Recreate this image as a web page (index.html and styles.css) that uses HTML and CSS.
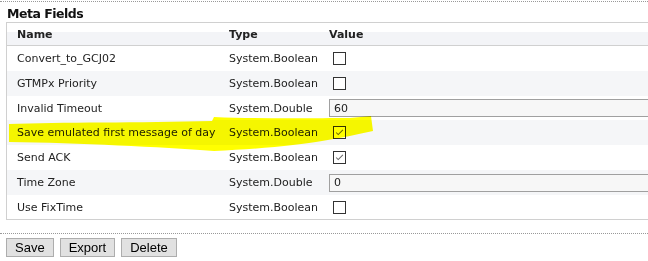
FILE: index.html
```html
<!DOCTYPE html>
<html lang="en">
<head>
  <meta charset="UTF-8">
  <title>Meta Fields</title>
  <link rel="stylesheet" href="styles.css">
</head>
<body>
  <div class="page">
    <h3 class="title">Meta Fields</h3>

    <div class="grid-box">
      <div class="row head">
        <div class="cell name">Name</div>
        <div class="cell type">Type</div>
        <div class="cell value">Value</div>
      </div>
      <div class="row">
        <div class="cell name">Convert_to_GCJ02</div>
        <div class="cell type">System.Boolean</div>
        <div class="cell value"><span class="check"></span></div>
      </div>
      <div class="row alt">
        <div class="cell name">GTMPx Priority</div>
        <div class="cell type">System.Boolean</div>
        <div class="cell value"><span class="check"></span></div>
      </div>
      <div class="row short">
        <div class="cell name">Invalid Timeout</div>
        <div class="cell type">System.Double</div>
        <div class="cell value"><input type="text" class="field" value="60"></div>
      </div>
      <div class="row alt">
        <div class="cell name">Save emulated first message of day</div>
        <div class="cell type">System.Boolean</div>
        <div class="cell value">
          <span class="check"><svg viewBox="0 0 13 13"><path d="M2.5 6.5 L5 9 L10.5 3.5"/></svg></span>
        </div>
      </div>
      <div class="row">
        <div class="cell name">Send ACK</div>
        <div class="cell type">System.Boolean</div>
        <div class="cell value">
          <span class="check"><svg viewBox="0 0 13 13"><path d="M2.5 6.5 L5 9 L10.5 3.5"/></svg></span>
        </div>
      </div>
      <div class="row alt">
        <div class="cell name">Time Zone</div>
        <div class="cell type">System.Double</div>
        <div class="cell value"><input type="text" class="field" value="0"></div>
      </div>
      <div class="row short">
        <div class="cell name">Use FixTime</div>
        <div class="cell type">System.Boolean</div>
        <div class="cell value"><span class="check"></span></div>
      </div>
    </div>

    <div class="controls">
      <button>Save</button>
      <button>Export</button>
      <button>Delete</button>
    </div>

    <!-- highlighter mark drawn over the row -->
    <svg class="marker" width="648" height="261" viewBox="0 0 648 261">
      <path d="M9 124 C 60 122, 140 123, 212 121 L 214 117 C 260 119, 320 118, 350 118 L 371 116 L 373 131 C 355 135, 340 138, 322 141 C 300 145, 260 149, 214 151 C 160 147, 80 143, 9 142 Z"/>
    </svg>
  </div>
</body>
</html>
```

FILE: styles.css
```css
body {
  margin: 0;
  font-family: "DejaVu Sans", Verdana, sans-serif;
  font-size: 11px;
  color: #222;
  background: #fff;
  overflow: hidden;
}

.page {
  position: relative;
  width: 648px;
  height: 261px;
  overflow: hidden;
  border-top: 1px dotted #999;
  margin-top: 1px;
}

.title {
  margin: 0;
  padding: 4px 0 0 7px;
  height: 16px;
  font-size: 12.5px;
  letter-spacing: -0.5px;
  font-weight: bold;
  color: #111;
}

.grid-box {
  margin-left: 6px;
  width: 700px;
  border: 1px solid #d0d0d0;
}

.row {
  display: flex;
  align-items: center;
  height: 25px;
}

.row.short {
  height: 24px;
}

.row.alt {
  background: #f5f6f8;
}

.row.head {
  height: 22px;
  font-weight: bold;
  background: linear-gradient(#fff 0, #fff 40%, #f3f4f7 42%, #f3f4f7 100%);
  border-bottom: 1px solid #d0d0d0;
}

.cell {
  flex-shrink: 0;
  padding-left: 10px;
  white-space: nowrap;
}

.cell.name {
  width: 202px;
}

.cell.type {
  width: 90px;
}

.cell.value {
  flex: 1 0 auto;
  display: flex;
  align-items: center;
}

.check {
  display: inline-block;
  width: 11px;
  height: 11px;
  margin-left: 4px;
  border: 1px solid #333;
  background: #fff;
}

.check svg {
  display: block;
  width: 11px;
  height: 11px;
  fill: none;
  stroke: #666;
  stroke-width: 1.2;
}

.field {
  width: 400px;
  height: 16px;
  margin: 0;
  padding: 0 4px;
  border: 1px solid #a0a0a0;
  background: #f7f7f7;
  font-family: "DejaVu Sans", Verdana, sans-serif;
  font-size: 11px;
  color: #222;
}

.controls {
  margin-top: 13px;
  padding: 4px 0 0 6px;
  border-top: 1px dotted #999;
  display: flex;
  gap: 6px;
}

button {
  height: 19px;
  padding: 0 8px;
  font-family: "Liberation Sans", Arial, sans-serif;
  font-size: 13px;
  color: #000;
  background: #e1e1e1;
  border: 1px solid #adadad;
  border-radius: 0;
}

.marker {
  position: absolute;
  left: 0;
  top: -2px;
  mix-blend-mode: multiply;
  pointer-events: none;
}

.marker path {
  fill: #ffff00;
}
```
